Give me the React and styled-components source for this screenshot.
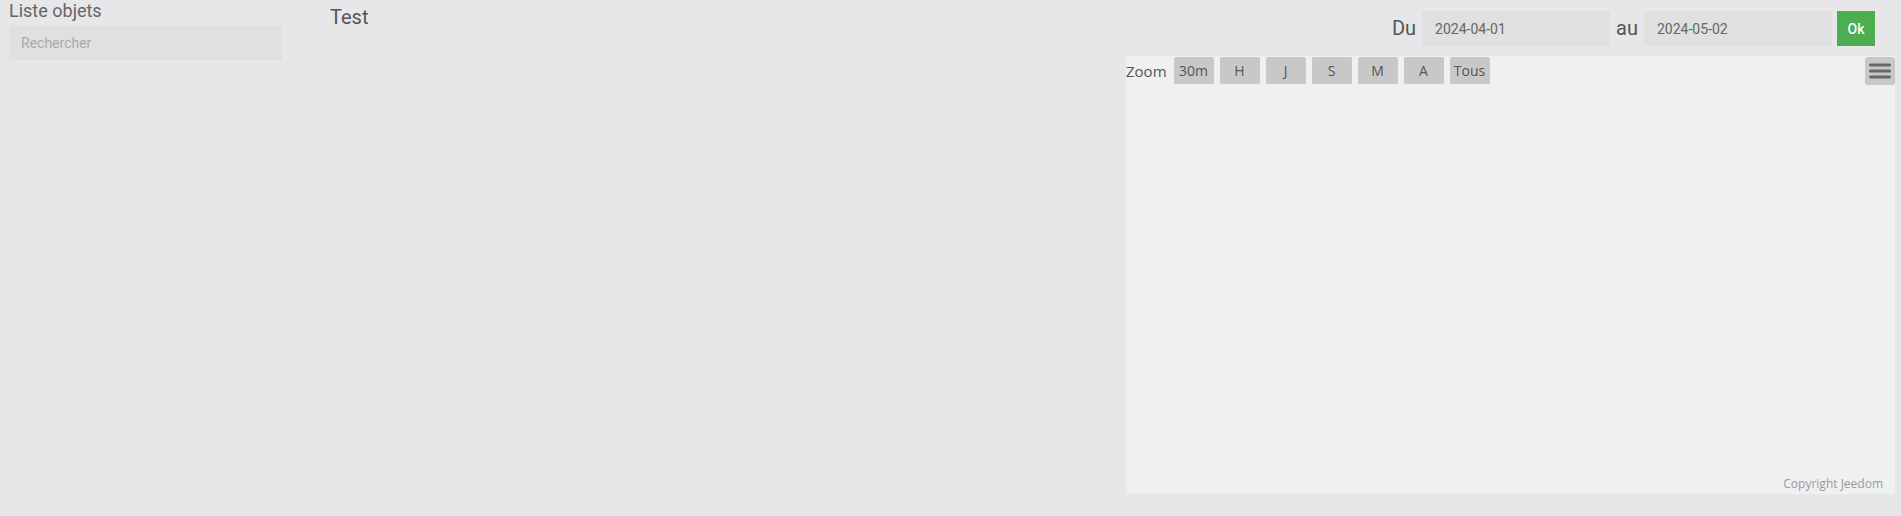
import React from "react";
import styled, { createGlobalStyle } from "styled-components";

const Global = createGlobalStyle`
  html, body { margin: 0; padding: 0; background: #e7e7e9; }
  body { font-family: Roboto, "Liberation Sans", sans-serif; }
  * { box-sizing: border-box; }
`;

const Page = styled.div`
  display: flex;
  width: 1901px;
  height: 516px;
  background: #e7e7e9;
`;

const Sidebar = styled.aside`
  width: 273px;
  margin-left: 9px;
  display: flex;
  flex-direction: column;
`;

const SideTitle = styled.div`
  font-size: 18px;
  line-height: 20px;
  color: #666;
  height: 25px;
  padding-top: 1px;
`;

const Search = styled.input`
  width: 273px;
  height: 35px;
  border: none;
  outline: none;
  background: #dfe0df;
  padding: 0 12px;
  font-family: Roboto, sans-serif;
  font-size: 14px;
  color: #555;
  &::placeholder { color: #aaa; }
`;

const Main = styled.main`
  flex: 1;
  padding-left: 48px;
  padding-right: 6px;
  display: flex;
  flex-direction: column;
`;

const Header = styled.div`
  display: flex;
  justify-content: space-between;
  align-items: flex-start;
  height: 56px;
`;

const Title = styled.div`
  font-size: 20px;
  line-height: 24px;
  color: #555;
  padding-top: 5px;
`;

const DateForm = styled.div`
  display: flex;
  align-items: center;
  margin-top: 11px;
  margin-right: 20px;
`;

const Label = styled.span`
  font-size: 20px;
  color: #555;
  margin: 0 6px;
  line-height: 35px;
`;

const DateInput = styled.div`
  width: 188px;
  height: 35px;
  background: #dfe0df;
  color: #666;
  font-size: 14px;
  display: flex;
  align-items: center;
  padding-left: 13px;
`;

const OkButton = styled.button`
  width: 38px;
  height: 35px;
  margin-left: 5px;
  border: none;
  background: #4cae50;
  color: #f4fff8;
  font-family: Roboto, sans-serif;
  font-size: 14px;
  font-weight: 500;
  padding: 0;
`;

const Chart = styled.div`
  align-self: flex-end;
  width: 769px;
  height: 438px;
  background: #eff0f2;
  position: relative;
  font-family: "Open Sans", "DejaVu Sans", sans-serif;
`;

const ZoomBar = styled.div`
  display: flex;
  align-items: center;
  gap: 6px;
  padding-top: 1px;
  height: 28px;
`;

const ZoomLabel = styled.span`
  font-size: 15px;
  color: #555;
  margin-right: 1px;
`;

const RangeButton = styled.button`
  width: 40px;
  height: 27px;
  border: none;
  border-radius: 2px;
  background: #c8c8c8;
  color: #555;
  font-family: "Open Sans", sans-serif;
  font-size: 14px;
  padding: 0;
`;

const MenuButton = styled.button`
  position: absolute;
  top: 1px;
  right: 0;
  width: 30px;
  height: 28px;
  border: none;
  border-radius: 3px;
  background: #c8c8c8;
  padding: 0;
  display: flex;
  align-items: center;
  justify-content: center;
`;

const Credits = styled.span`
  position: absolute;
  right: 12px;
  bottom: 2px;
  font-size: 12px;
  color: #999;
`;

const ranges = ["30m", "H", "J", "S", "M", "A", "Tous"];

export default function App() {
  return (
    <>
      <Global />
      <Page>
        <Sidebar>
          <SideTitle>Liste objets</SideTitle>
          <Search placeholder="Rechercher" />
        </Sidebar>
        <Main>
          <Header>
            <Title>Test</Title>
            <DateForm>
              <Label>Du</Label>
              <DateInput>2024-04-01</DateInput>
              <Label>au</Label>
              <DateInput>2024-05-02</DateInput>
              <OkButton>Ok</OkButton>
            </DateForm>
          </Header>
          <Chart>
            <ZoomBar>
              <ZoomLabel>Zoom</ZoomLabel>
              {ranges.map((r) => (
                <RangeButton key={r}>{r}</RangeButton>
              ))}
            </ZoomBar>
            <MenuButton>
              <svg width="22" height="16" viewBox="0 0 22 16">
                <g stroke="#666" strokeWidth="3" strokeLinecap="round">
                  <line x1="1.5" y1="2" x2="20.5" y2="2" />
                  <line x1="1.5" y1="8" x2="20.5" y2="8" />
                  <line x1="1.5" y1="14" x2="20.5" y2="14" />
                </g>
              </svg>
            </MenuButton>
            <Credits>Copyright Jeedom</Credits>
          </Chart>
        </Main>
      </Page>
    </>
  );
}
